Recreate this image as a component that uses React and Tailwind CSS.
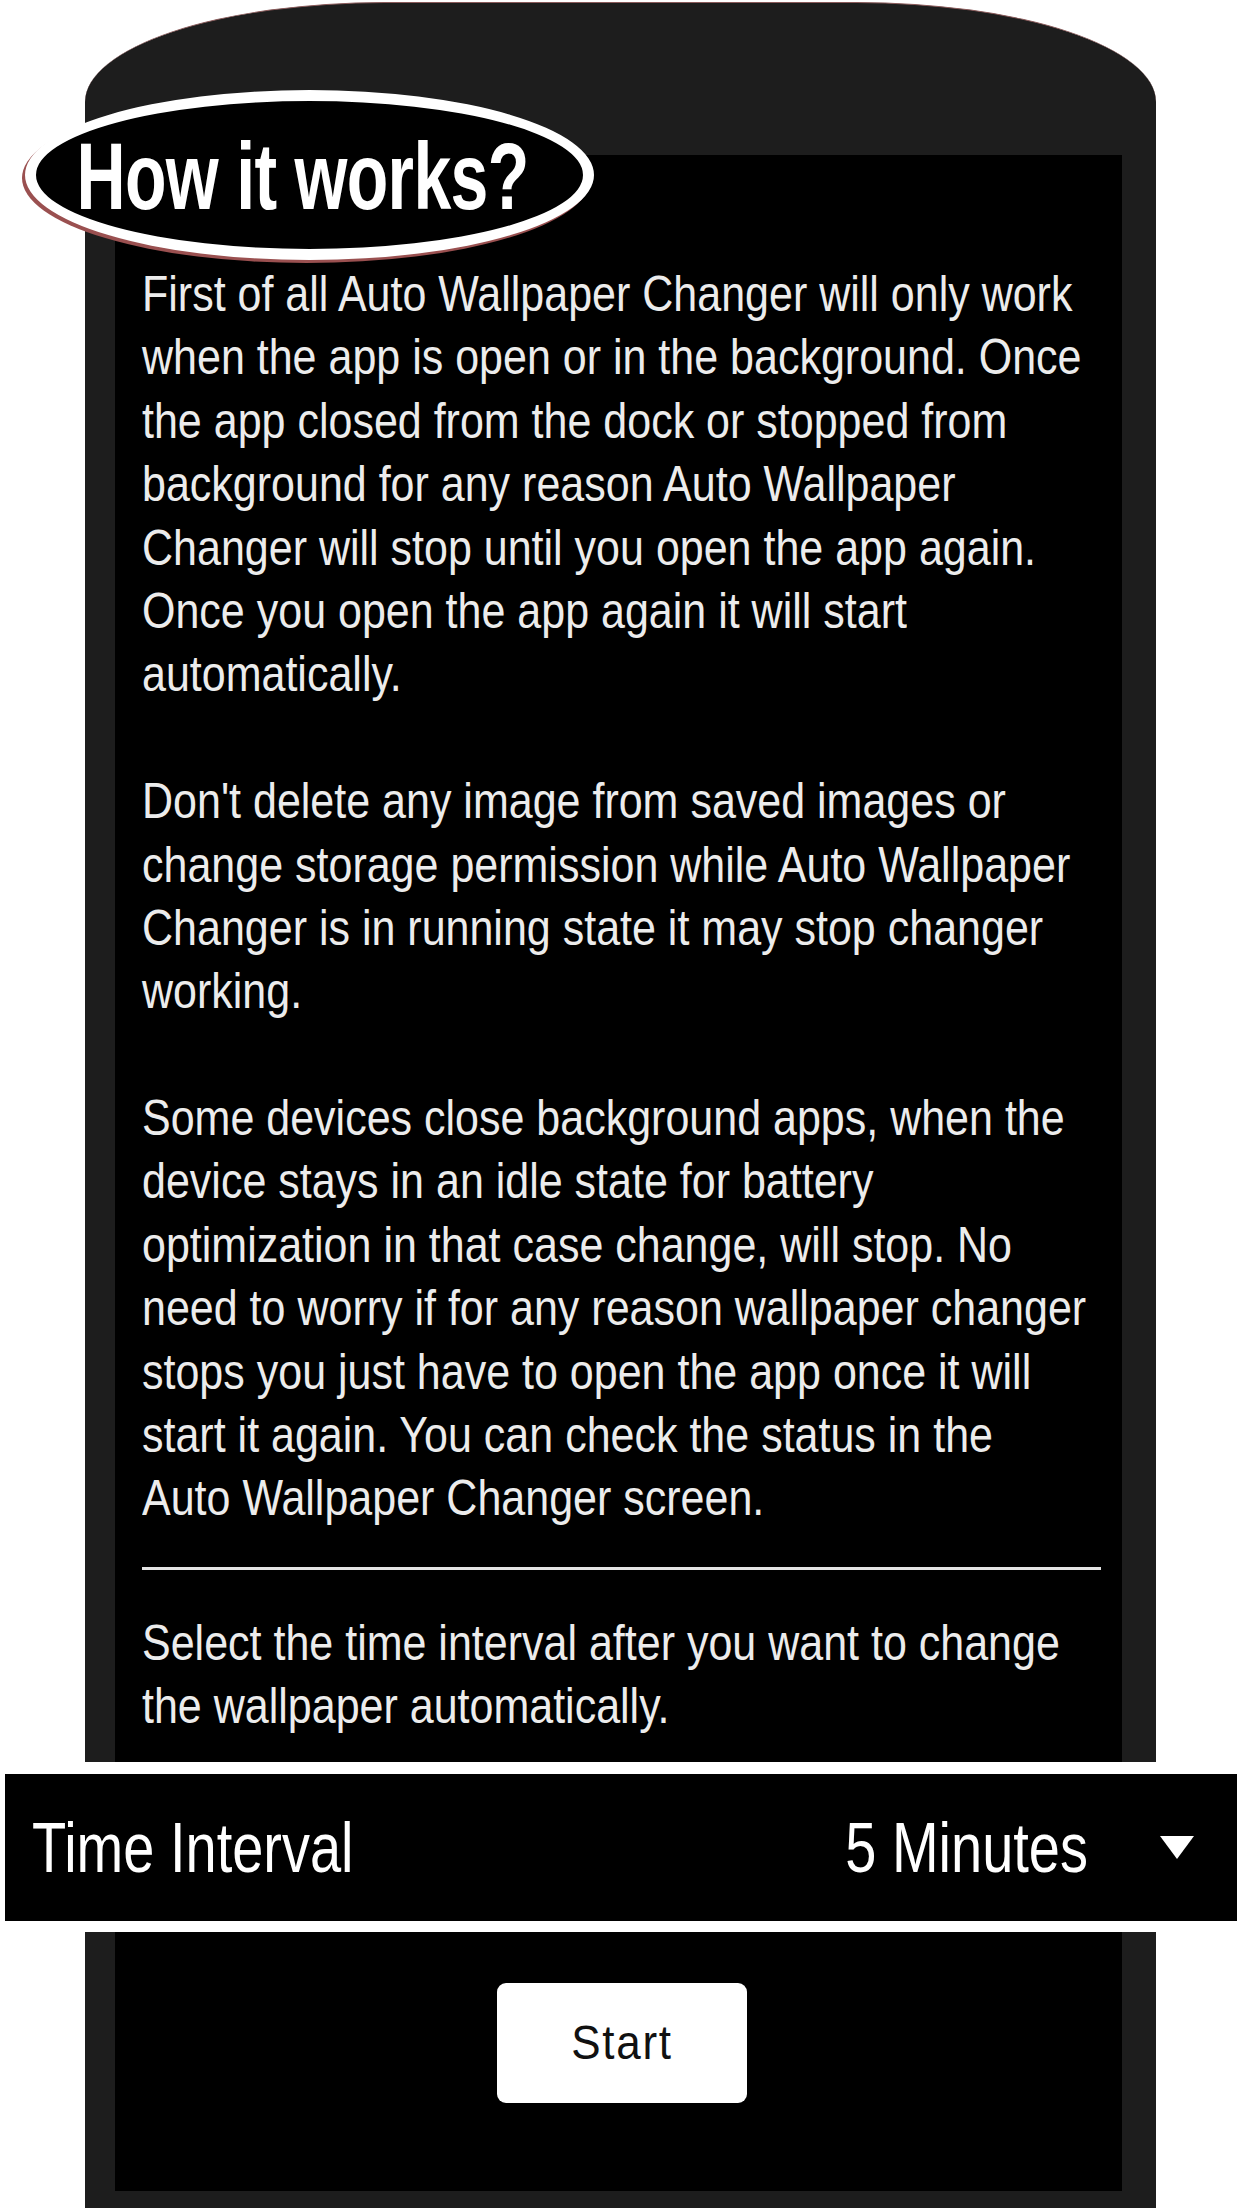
const FONT = "font-['Liberation_Sans',Arial,sans-serif]"

const intro = [
  'First of all Auto Wallpaper Changer will only work',
  'when the app is open or in the background. Once',
  'the app closed from the dock or stopped from',
  'background for any reason Auto Wallpaper',
  'Changer will stop until you open the app again.',
  'Once you open the app again it will start',
  'automatically.',
]

const warning = [
  "Don't delete any image from saved images or",
  'change storage permission while Auto Wallpaper',
  'Changer is in running state it may stop changer',
  'working.',
]

const devices = [
  'Some devices close background apps, when the',
  'device stays in an idle state for battery',
  'optimization in that case change, will stop. No',
  'need to worry if for any reason wallpaper changer',
  'stops you just have to open the app once it will',
  'start it again. You can check the status in the',
  'Auto Wallpaper Changer screen.',
]

const select = [
  'Select the time interval after you want to change',
  'the wallpaper automatically.',
]

function Paragraph({ lines, className = '' }) {
  return (
    <div className={className}>
      {lines.map((l) => (
        <div key={l} className="h-[63.4px] leading-[63.4px] whitespace-nowrap scale-y-[1.18]">
          {l}
        </div>
      ))}
    </div>
  )
}

export default function App() {
  return (
    <div className={`relative w-[1242px] h-[2208px] overflow-hidden bg-white ${FONT}`}>
      {/* phone, upper part */}
      <div className="ml-[85px] mt-[2px] w-[1071px] h-[1760px] bg-[#1d1d1d] rounded-t-[300px_100px] border-t border-[#8a5a5a] pt-[152px] pl-[30px] pr-[34px] flex flex-col">
        <div className="flex-1 bg-black pt-[107px] pl-[27px] pr-[20px] text-[43px] text-[#ececec]">
          <Paragraph lines={intro} />
          <Paragraph lines={warning} className="mt-[63.4px]" />
          <Paragraph lines={devices} className="mt-[63.4px]" />
          <div className="mt-[37px] h-[3px] bg-[#e4e4e4] mr-[1px]" />
          <Paragraph lines={select} className="mt-[41px]" />
        </div>
      </div>

      {/* time interval band */}
      <div className="bg-white pt-[12px] pb-[11px] px-[5px]">
        <div className="h-[147px] bg-black flex items-center pl-[27px] pr-[43px] text-white text-[56px] leading-none">
          <span className="scale-y-[1.27]">Time Interval</span>
          <span className="ml-auto scale-y-[1.27]">5 Minutes</span>
          <svg className="ml-[72px]" width="34" height="23" viewBox="0 0 34 23">
            <polygon points="0,0 34,0 17,23" fill="#fff" />
          </svg>
        </div>
      </div>

      {/* phone, lower part */}
      <div className="ml-[85px] w-[1071px] h-[276px] bg-[#1d1d1d] pl-[30px] pr-[34px]">
        <div className="h-[259px] bg-black pt-[51px] flex justify-center">
          <button className="ml-[7px] w-[250px] h-[120px] rounded-[9px] bg-white text-[#111] text-[44px] tracking-[0.04em] flex items-center justify-center">
            <span className="scale-y-[1.1]">Start</span>
          </button>
        </div>
      </div>

      {/* heading badge */}
      <div className="absolute left-[25px] top-[90px] w-[569px] h-[170px] rounded-[50%] bg-black border-[11px] border-white shadow-[-3px_3px_0_0_#9a5050] flex items-center justify-center pr-[14px]">
        <span className="text-white text-[68px] font-bold leading-none scale-y-[1.4] tracking-[-0.01em]">How it works?</span>
      </div>
    </div>
  )
}
